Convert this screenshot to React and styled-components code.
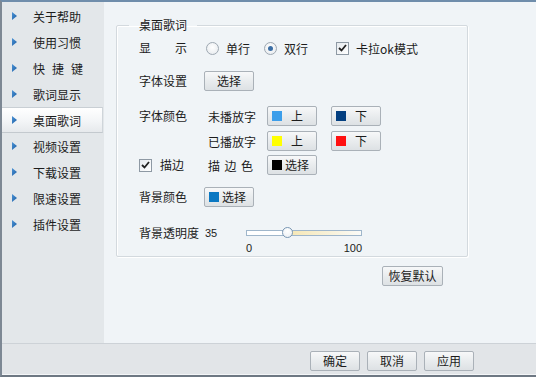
import React, { useState } from "react";
import styled, { createGlobalStyle } from "styled-components";

const GlobalStyle = createGlobalStyle`
  html, body { margin: 0; padding: 0; background: #f0f4f7; }
  body {
    font-family: "Noto Sans CJK SC", "Noto Sans", sans-serif;
    font-size: 12px;
    color: #1c1c1c;
  }
`;

const MENU = ["关于帮助", "使用习惯", "快捷键", "歌词显示", "桌面歌词", "视频设置", "下载设置", "限速设置", "插件设置"];

const Window = styled.div`
  width: 536px;
  height: 377px;
  box-sizing: border-box;
  border-top: 2px solid #6f8dab;
  border-left: 2px solid #7d8894;
  border-bottom: 2px solid #6e7883;
  display: flex;
  flex-direction: column;
  background: #f0f4f7;
`;

const Body = styled.div`
  flex: 1;
  display: flex;
  min-height: 0;
`;

const Sidebar = styled.div`
  width: 102px;
  background: #e3e7ea;
  padding-top: 1px;
  box-sizing: border-box;
`;

const MenuItem = styled.div`
  height: 26px;
  box-sizing: border-box;
  display: flex;
  align-items: center;
  padding-left: 10px;
  margin-right: ${(p) => (p.$active ? "1px" : "0")};
  border-top: 1px solid ${(p) => (p.$active ? "#c9cfd4" : "transparent")};
  border-bottom: 1px solid ${(p) => (p.$active ? "#c3c9ce" : "transparent")};
  border-right: 1px solid ${(p) => (p.$active ? "#cfd5da" : "transparent")};
  background: ${(p) => (p.$active ? "linear-gradient(#ffffff, #f3f5f7 55%, #e6e9ec)" : "transparent")};
  span {
    margin-left: 16px;
    letter-spacing: ${(p) => p.$spacing || 0}px;
  }
`;

const Main = styled.div`
  flex: 1;
  padding: 15px 0 0 12px;
  box-sizing: border-box;
`;

const Group = styled.fieldset`
  width: 352px;
  box-sizing: border-box;
  margin: 0;
  padding: 5px 0 3px 22px;
  border: 1px solid #d3d9de;
  box-shadow: inset 1px 1px 0 #fff, 1px 1px 0 #fff;
  border-radius: 2px;
`;

const Legend = styled.legend`
  margin-left: -10px;
  padding: 0 10px;
  line-height: 16px;
`;

const Row = styled.div`
  display: flex;
  align-items: ${(p) => (p.$top ? "flex-start" : "center")};
  height: ${(p) => p.$h || 20}px;
  margin-top: ${(p) => p.$mt || 0}px;
`;

const Label = styled.div`
  width: ${(p) => p.$w || 65}px;
  flex-shrink: 0;
  letter-spacing: ${(p) => p.$spacing || 0}px;
  white-space: nowrap;
  display: flex;
  align-items: center;
  line-height: 16px;
`;

const SubLabel = styled.div`
  width: 59px;
  padding-left: 4px;
  flex-shrink: 0;
  letter-spacing: ${(p) => p.$spacing || 0}px;
  white-space: nowrap;
`;

const Option = styled.label`
  display: flex;
  align-items: center;
  gap: 7px;
  margin-left: ${(p) => p.$ml || 0}px;
  white-space: nowrap;
`;

const RadioCircle = styled.span`
  width: 13px;
  height: 13px;
  box-sizing: border-box;
  border-radius: 50%;
  border: 1px solid #9ea8b2;
  background: radial-gradient(circle at 50% 40%, #ffffff, #e4e8ec);
  display: flex;
  align-items: center;
  justify-content: center;
  &::after {
    content: "";
    width: 5px;
    height: 5px;
    border-radius: 50%;
    background: ${(p) => (p.$on ? "#3b6ea5" : "transparent")};
  }
`;

const CheckBox = styled.span`
  width: 13px;
  height: 13px;
  box-sizing: border-box;
  border: 1px solid #8e99a4;
  background: linear-gradient(135deg, #e6eaee, #ffffff);
  display: flex;
  align-items: center;
  justify-content: center;
`;

const Button = styled.button`
  width: ${(p) => p.$w || 50}px;
  height: 20px;
  box-sizing: border-box;
  margin: 0 0 0 ${(p) => p.$ml || 0}px;
  padding: 0 ${(p) => (p.$swatch ? 4 : 0)}px;
  border: 1px solid #aab1b8;
  border-radius: 2px;
  background: linear-gradient(#f7f8f9, #e9ecee 50%, #dde1e4);
  font-family: inherit;
  font-size: 12px;
  color: #1c1c1c;
  line-height: 18px;
  display: flex;
  align-items: center;
  justify-content: ${(p) => (p.$swatch ? "flex-start" : "center")};
  flex-shrink: 0;
`;

const Swatch = styled.span`
  width: 10px;
  height: 10px;
  background: ${(p) => p.$color};
  margin-right: ${(p) => p.$gap || 4}px;
  flex-shrink: 0;
`;

const Value = styled.div`
  width: 41px;
  font-family: "Liberation Sans", Arial, sans-serif;
  font-size: 11px;
  line-height: 16px;
  flex-shrink: 0;
`;

const Slider = styled.div`
  width: 116px;
  padding-top: 5px;
`;

const Track = styled.div`
  position: relative;
  height: 6px;
  box-sizing: border-box;
  border: 1px solid #9fb6cb;
  background: linear-gradient(90deg, #ffffff 0%, #ffffff 35%, #f6e8b8 40%, #f8f2dc 75%, #fbfbf8 100%);
`;

const Thumb = styled.span`
  position: absolute;
  top: -4px;
  width: 11px;
  height: 11px;
  box-sizing: border-box;
  margin-left: -5px;
  border-radius: 50%;
  border: 1px solid #7896b3;
  background: radial-gradient(circle at 50% 35%, #ffffff, #e8edf2);
`;

const Scale = styled.div`
  display: flex;
  justify-content: space-between;
  margin-top: 6px;
  font-family: "Liberation Sans", Arial, sans-serif;
  font-size: 11px;
  line-height: 12px;
`;

const RestoreRow = styled.div`
  width: 352px;
  display: flex;
  justify-content: flex-end;
  padding-right: 25px;
  box-sizing: border-box;
  margin-top: 9px;
`;

const Footer = styled.div`
  height: 32px;
  box-sizing: border-box;
  border-top: 1px solid #cdd2d7;
  border-bottom: 1px solid #f4f6f8;
  background: #e2e5e8;
  display: flex;
  justify-content: flex-end;
  align-items: flex-start;
  padding: 7px 62px 0 0;
  gap: 7px;
`;

const Arrow = () => (
  <svg width="5" height="8" viewBox="0 0 5 8">
    <defs>
      <linearGradient id="ar" x1="0" y1="0" x2="1" y2="1">
        <stop offset="0" stopColor="#4b93d6" />
        <stop offset="1" stopColor="#1d5ea3" />
      </linearGradient>
    </defs>
    <polygon points="0,0 5,4 0,8" fill="url(#ar)" />
  </svg>
);

const Tick = () => (
  <svg width="9" height="8" viewBox="0 0 9 8">
    <path d="M1 4 L3.5 6.5 L8 1" stroke="#222" strokeWidth="1.8" fill="none" />
  </svg>
);

export default function App() {
  const [lines, setLines] = useState("double");
  const opacity = 35;

  return (
    <>
      <GlobalStyle />
      <Window>
        <Body>
          <Sidebar>
            {MENU.map((m) => (
              <MenuItem key={m} $active={m === "桌面歌词"} $spacing={m === "快捷键" ? 7 : 0}>
                <Arrow />
                <span>{m}</span>
              </MenuItem>
            ))}
          </Sidebar>
          <Main>
            <Group>
              <Legend>桌面歌词</Legend>
              <Row>
                <Label $spacing={24}>显示</Label>
                <Option $ml={2} onClick={() => setLines("single")}>
                  <RadioCircle $on={lines === "single"} />
                  单行
                </Option>
                <Option $ml={14} onClick={() => setLines("double")}>
                  <RadioCircle $on={lines === "double"} />
                  双行
                </Option>
                <Option $ml={28}>
                  <CheckBox><Tick /></CheckBox>
                  卡拉ok模式
                </Option>
              </Row>
              <Row $mt={13}>
                <Label>字体设置</Label>
                <Button>选择</Button>
              </Row>
              <Row $mt={15}>
                <Label>字体颜色</Label>
                <SubLabel>未播放字</SubLabel>
                <Button $swatch>
                  <Swatch $color="#3c9eea" $gap={9} />上
                </Button>
                <Button $swatch $ml={14}>
                  <Swatch $color="#033f80" $gap={9} />下
                </Button>
              </Row>
              <Row $mt={5}>
                <Label />
                <SubLabel>已播放字</SubLabel>
                <Button $swatch>
                  <Swatch $color="#ffff00" $gap={9} />上
                </Button>
                <Button $swatch $ml={14}>
                  <Swatch $color="#ff1010" $gap={9} />下
                </Button>
              </Row>
              <Row $mt={4}>
                <Label>
                  <Option>
                    <CheckBox><Tick /></CheckBox>
                    <span style={{ marginLeft: 1 }}>描边</span>
                  </Option>
                </Label>
                <SubLabel $spacing={4.5}>描边色</SubLabel>
                <Button $swatch>
                  <Swatch $color="#000000" $gap={3} />选择
                </Button>
              </Row>
              <Row $mt={12}>
                <Label>背景颜色</Label>
                <Button $swatch>
                  <Swatch $color="#0b78c2" $gap={3} />选择
                </Button>
              </Row>
              <Row $mt={18} $h={28} $top>
                <Label $w={66}>背景透明度</Label>
                <Value>{opacity}</Value>
                <Slider>
                  <Track>
                    <Thumb style={{ left: `${opacity}%` }} />
                  </Track>
                  <Scale>
                    <span>0</span>
                    <span>100</span>
                  </Scale>
                </Slider>
              </Row>
            </Group>
            <RestoreRow>
              <Button $w={61}>恢复默认</Button>
            </RestoreRow>
          </Main>
        </Body>
        <Footer>
          <Button $w={50}>确定</Button>
          <Button $w={50}>取消</Button>
          <Button $w={50}>应用</Button>
        </Footer>
      </Window>
    </>
  );
}
